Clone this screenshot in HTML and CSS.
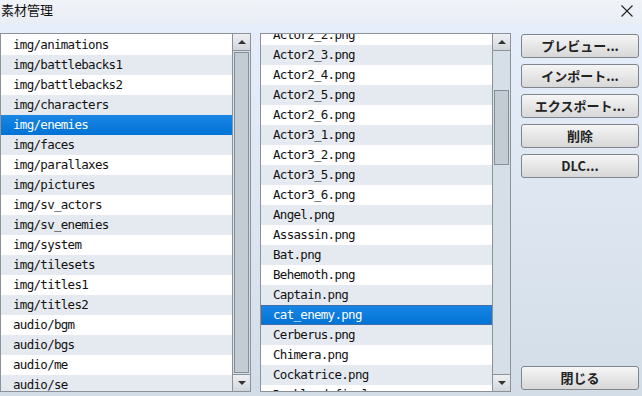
FILE: index.html
```html
<!DOCTYPE html>
<html lang="ja">
<head>
  <meta charset="UTF-8">
  <title>素材管理</title>
  <link rel="stylesheet" href="styles.css">
</head>
<body>
  <div class="titlebar">
    <span class="title">素材管理</span>
    <span class="close">
      <svg width="12" height="12" viewBox="0 0 12 12"><path d="M0.5 0.5 L11.5 11.5 M11.5 0.5 L0.5 11.5" stroke="#222" stroke-width="1.1" fill="none"/></svg>
    </span>
  </div>

  <div class="main">
    <div class="listbox">
      <div class="rows">
        <div class="row">img/animations</div>
        <div class="row">img/battlebacks1</div>
        <div class="row">img/battlebacks2</div>
        <div class="row">img/characters</div>
        <div class="row selected">img/enemies</div>
        <div class="row">img/faces</div>
        <div class="row">img/parallaxes</div>
        <div class="row">img/pictures</div>
        <div class="row">img/sv_actors</div>
        <div class="row">img/sv_enemies</div>
        <div class="row">img/system</div>
        <div class="row">img/tilesets</div>
        <div class="row">img/titles1</div>
        <div class="row">img/titles2</div>
        <div class="row">audio/bgm</div>
        <div class="row">audio/bgs</div>
        <div class="row">audio/me</div>
        <div class="row">audio/se</div>
      </div>
      <div class="scrollbar">
        <div class="sb-btn"><span class="arrow up"></span></div>
        <div class="sb-track">
          <div class="sb-thumb full"></div>
        </div>
        <div class="sb-btn"><span class="arrow down"></span></div>
      </div>
    </div>

    <div class="listbox">
      <div class="rows">
        <div class="rows-inner scrolled">
          <div class="row">Actor2_2.png</div>
          <div class="row">Actor2_3.png</div>
          <div class="row">Actor2_4.png</div>
          <div class="row">Actor2_5.png</div>
          <div class="row">Actor2_6.png</div>
          <div class="row">Actor3_1.png</div>
          <div class="row">Actor3_2.png</div>
          <div class="row">Actor3_5.png</div>
          <div class="row">Actor3_6.png</div>
          <div class="row">Angel.png</div>
          <div class="row">Assassin.png</div>
          <div class="row">Bat.png</div>
          <div class="row">Behemoth.png</div>
          <div class="row">Captain.png</div>
          <div class="row selected focus">cat_enemy.png</div>
          <div class="row">Cerberus.png</div>
          <div class="row">Chimera.png</div>
          <div class="row">Cockatrice.png</div>
          <div class="row">Darklord_final.png</div>
        </div>
      </div>
      <div class="scrollbar">
        <div class="sb-btn"><span class="arrow up"></span></div>
        <div class="sb-track">
          <div class="sb-thumb part"></div>
        </div>
        <div class="sb-btn"><span class="arrow down"></span></div>
      </div>
    </div>

    <div class="buttons">
      <button class="btn">プレビュー...</button>
      <button class="btn">インポート...</button>
      <button class="btn">エクスポート...</button>
      <button class="btn">削除</button>
      <button class="btn">DLC...</button>
      <button class="btn close-btn">閉じる</button>
    </div>
  </div>
</body>
</html>
```

FILE: styles.css
```css
html, body {
  margin: 0;
  padding: 0;
}

body {
  width: 642px;
  height: 396px;
  overflow: hidden;
  font-family: "DejaVu Sans Mono", monospace;
  background: linear-gradient(180deg, #e6effb 0%, #dde6f1 50%, #d3dde8 100%);
  color: #111;
}

.titlebar {
  height: 24px;
  display: flex;
  align-items: center;
  justify-content: space-between;
  background: linear-gradient(180deg, #f0f3f8 0%, #e9eef6 100%);
  font-family: "Noto Sans CJK JP", sans-serif;
  font-size: 13px;
}

.title {
  padding-left: 1px;
  margin-top: -6px;
  color: #111;
}

.close {
  width: 12px;
  height: 12px;
  margin-right: 9px;
  margin-top: -3px;
  display: flex;
}

.main {
  display: flex;
  padding-top: 9px;
  height: 359px;
}

.listbox {
  width: 249px;
  height: 357px;
  border: 1px solid #8b929a;
  background: #fff;
  display: flex;
  margin-right: 9px;
}

.rows {
  flex: 1;
  overflow: hidden;
  padding-top: 1px;
}

.rows-inner.scrolled {
  margin-top: -10px;
}

.row {
  height: 20px;
  line-height: 20px;
  padding-left: 12px;
  font-size: 12.5px;
  letter-spacing: -0.7px;
  white-space: nowrap;
  background: #fff;
}

.row:nth-child(even) {
  background: #e5eaf0;
}

.row.selected {
  background: linear-gradient(180deg, #1a86e6 0%, #0073d4 100%);
  color: #fff;
}

.row.focus {
  box-shadow: inset 0 0 0 1px #3d6fa8;
}

.scrollbar {
  width: 17px;
  display: flex;
  flex-direction: column;
  background: #d6dee7;
  border-left: 1px solid #8b929a;
}

.sb-btn {
  height: 16px;
  border-bottom: 1px solid #8b929a;
  background: linear-gradient(180deg, #eef0f3 0%, #d2d6db 100%);
  display: flex;
  align-items: center;
  justify-content: center;
}

.sb-btn:last-child {
  border-bottom: none;
  border-top: 1px solid #8b929a;
}

.arrow {
  width: 0;
  height: 0;
  border-left: 4px solid transparent;
  border-right: 4px solid transparent;
}

.arrow.up {
  border-bottom: 4px solid #333;
}

.arrow.down {
  border-top: 4px solid #333;
}

.sb-track {
  flex: 1;
  padding: 1px 1px;
  display: flex;
  flex-direction: column;
}

.sb-thumb {
  border: 1px solid #868e97;
  background: #c3cbd3;
}

.sb-thumb.full {
  flex: 1;
}

.sb-thumb.part {
  margin-top: 38px;
  height: 73px;
}

.buttons {
  display: flex;
  flex-direction: column;
  gap: 6px;
  margin-left: 1px;
  width: 119px;
  padding-top: 1px;
}

.btn {
  height: 24px;
  width: 118px;
  padding: 0;
  border: 1px solid #7f858c;
  border-radius: 3px;
  background: linear-gradient(180deg, #f6f6f6 0%, #e6e6e6 50%, #d8d8d8 100%);
  font-family: "Noto Sans CJK JP", sans-serif;
  font-weight: bold;
  font-size: 13px;
  color: #222;
  line-height: 20px;
}

.close-btn {
  margin-top: auto;
  margin-bottom: 2px;
}
```
